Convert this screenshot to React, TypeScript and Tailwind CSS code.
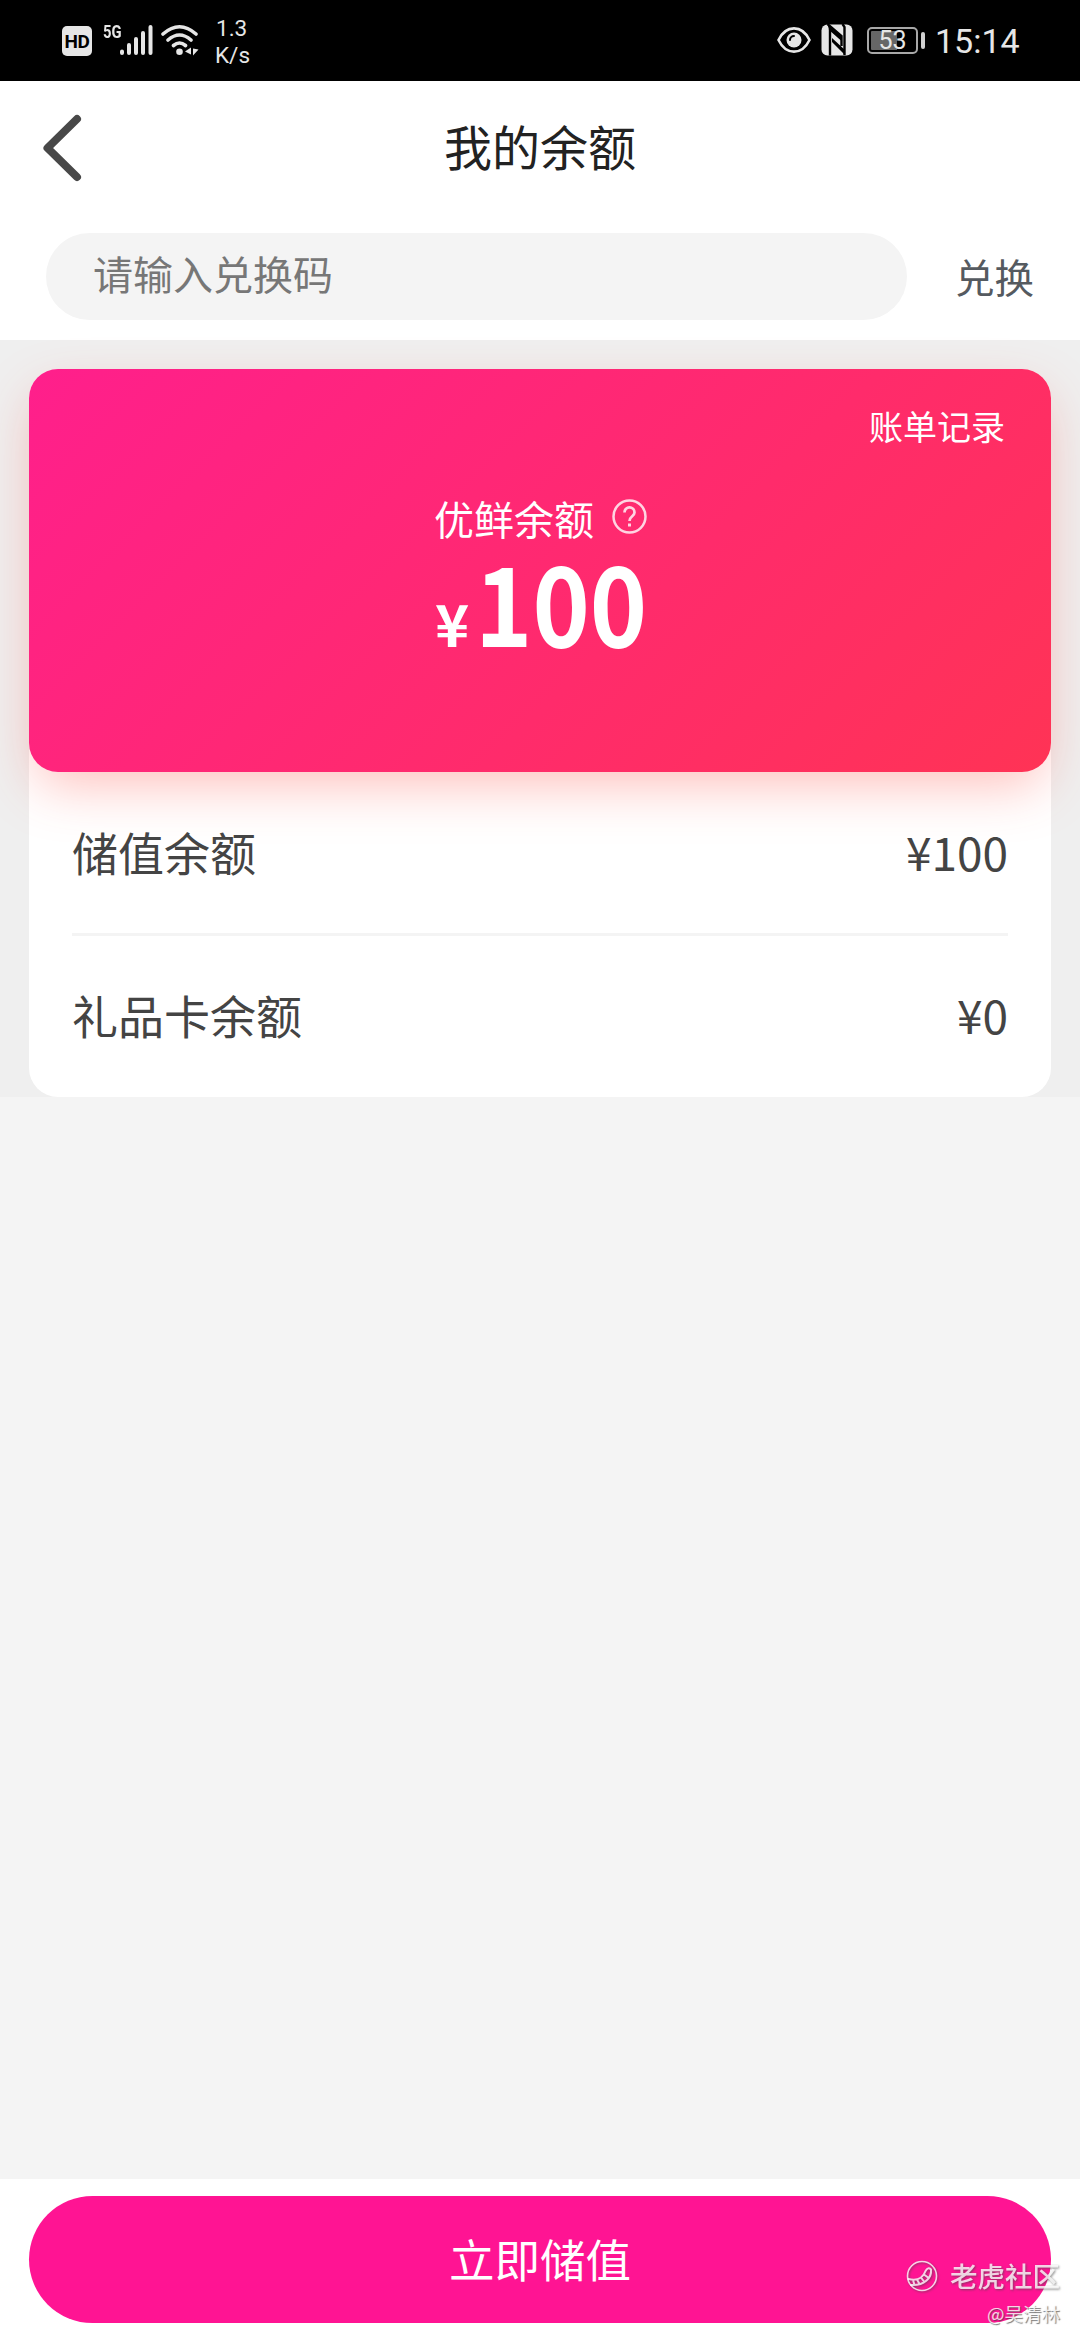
import React from "react";

function StatusBar() {
  return (
    <header className="flex h-[81px] items-start bg-black font-['Roboto',sans-serif] text-[#e6e6e6]">
      <div className="ml-[62px] mt-[26px] flex h-[30px] w-[30px] items-center justify-center rounded-[5px] bg-[#e6e6e6] text-[19px] font-bold leading-none tracking-[-0.500px] text-black">
        HD
      </div>
      <div className="ml-[11px] mt-[24px] w-[17px] origin-left scale-x-[0.82] text-[18px] font-bold leading-[16px]">5G</div>
      <svg className="mt-[24px] h-[32px] w-[34px]" viewBox="0 0 34 32" stroke="#e6e6e6" strokeWidth="4" strokeLinecap="round">
        <path d="M2 27.5v1.5M9 21v8M16 15v14M23 9v20M30.500 3v26" />
      </svg>
      <svg className="ml-[7px] mt-[24px] h-[32px] w-[38px]" viewBox="0 0 38 32" fill="none" stroke="#e6e6e6" strokeWidth="3.600" strokeLinecap="round">
        <path d="M2 10Q18.500-4.500 35 10M7 16Q18.500 6 30 16M12.500 21.500Q18.500 16.500 24.500 21.500" />
        <circle cx="18.500" cy="27.800" r="3.300" fill="#e6e6e6" stroke="none" />
        <path d="M30 23.500v7L24 27.500zM32 24.500v7l5.500-6z" fill="#e6e6e6" stroke="none" />
      </svg>
      <div className="ml-[16px] mt-[15px] text-[22.500px] leading-[27px]">
        <div className="pl-[1px]">1.3</div>
        <div>K/s</div>
      </div>
      <div className="flex-1" />
      <svg className="mt-[26px] h-[28px] w-[34px]" viewBox="0 0 34 28" fill="none" stroke="#e6e6e6">
        <path d="M1.500 14C9-1.500 25-1.500 32.500 14C25 29.500 9 29.500 1.500 14z" strokeWidth="2.600" />
        <circle cx="17" cy="14" r="7.500" fill="#e6e6e6" stroke="none" />
        <path d="M13 14a4 4 0 0 1 4-4" stroke="#000" strokeWidth="2" strokeLinecap="round" />
      </svg>
      <svg className="ml-[10px] mt-[24px] h-[32px] w-[32px]" viewBox="0 0 32 32">
        <rect x="0.500" y="0.500" width="31" height="31" rx="6" fill="#e6e6e6" />
        <path d="M6.500 0L20.500 12V22M9 5V31.500M21.500 0L23.500 3V31" fill="none" stroke="#000" strokeWidth="2.400" />
        <path d="M6.500 0L20.500 12V17L8 6zM11 14L24 26V31L11 18z" fill="#000" />
      </svg>
      <div className="ml-[14px] mt-[27px] flex h-[27px] w-[51px] items-center justify-center rounded-[5px] border-2 border-[#a8a8a8] bg-[linear-gradient(90deg,#666_26px,transparent_26px)] bg-origin-content p-[2px] text-[25px] leading-none [background-clip:content-box]">
        53
      </div>
      <div className="ml-[3px] mt-[32px] h-[17px] w-[4px] rounded-[2px] bg-[#d0d0d0]" />
      <div className="ml-[10px] mr-[60px] mt-[21px] w-[85px] whitespace-nowrap text-[34px] leading-[40px]">15:14</div>
    </header>
  );
}

function Row({ label, value }: { label: string; value: string }) {
  return (
    <div className="flex items-center justify-between text-[46px] leading-[60px] text-[#444]">
      <span>{label}</span>
      <span>{value}</span>
    </div>
  );
}

function Watermark() {
  return (
    <div className="pointer-events-none absolute bottom-[15px] right-[20px] flex flex-col items-end text-white/80">
      <div className="flex items-center [filter:drop-shadow(1px_1px_1px_rgba(70,70,70,0.75))]">
        <svg className="mr-[12px] h-[32px] w-[32px]" viewBox="0 0 32 32" fill="none" stroke="currentColor" strokeWidth="1.600">
          <circle cx="16" cy="16" r="14.500" />
          <path d="M2.500 19C11 21 17 18 19.500 11Q22 6.500 25 9.500C26 18 18 26 5 25M7 20l1.500 5M11 19.500l2.500 4.500M15 17.500l3 4M18 14.500l4 3" strokeWidth="2" strokeLinecap="round" />
        </svg>
        <span className="relative top-[-1px] text-[27.500px] font-medium leading-[32px]">老虎社区</span>
      </div>
      <span className="mt-[9px] text-[18.500px] leading-[24px] [text-shadow:1px_1px_1px_rgba(70,70,70,0.75)]">@吴清林</span>
    </div>
  );
}

export default function App() {
  return (
    <div className="flex h-[2340px] w-[1080px] flex-col overflow-hidden bg-[#f4f4f4] font-['Noto_Sans_CJK_SC',sans-serif]">
      <StatusBar />
      <div className="h-[259px] bg-white">
        <div className="relative flex h-[134px] items-center justify-center pb-[7px]">
          <button className="absolute left-[40px] top-[30px]" aria-label="返回">
            <svg className="h-[74px] w-[46px]" viewBox="0 0 46 74" fill="none" stroke="#484848" strokeWidth="8" strokeLinecap="round" strokeLinejoin="round">
              <path d="M37 8L7.500 37L37 66" />
            </svg>
          </button>
          <h1 className="text-[48px] leading-[60px] text-[#222]">我的余额</h1>
        </div>
        <div className="mt-[18px] flex items-center pl-[46px] pr-[46px]">
          <input
            className="h-[87px] w-[861px] rounded-full bg-[#f4f4f4] pb-[8px] pl-[47px] text-[40px] outline-none placeholder:text-[#777] placeholder:opacity-100"
            placeholder="请输入兑换码"
          />
          <button className="mb-[2px] ml-[48px] whitespace-nowrap text-[39.500px] leading-[60px] text-[#555a60]">兑换</button>
        </div>
      </div>

      <main className="h-[757px] bg-[#efefef] px-[29px] pt-[29px]">
        <div className="h-[728px] rounded-[29px] bg-white">
          <section className="flex h-[403px] flex-col items-center rounded-[29px] bg-[linear-gradient(135deg,#ff1f8c_0%,#ff3355_100%)] text-white shadow-[0_20px_54px_-8px_rgba(255,75,65,0.36)]">
            <button className="mr-[46px] mt-[32px] self-end text-[34px] leading-[50px]">账单记录</button>
            <div className="mt-[37px] flex items-center pl-[1px] text-[40px] leading-[60px]">
              优鲜余额
              <svg className="mb-[4px] ml-[18px] h-[35px] w-[35px] opacity-80" viewBox="0 0 35 35" fill="none" stroke="white" strokeWidth="2.500">
                <circle cx="17.500" cy="17.500" r="16" />
                <path d="M12.500 13.500C12.500 6.500 22.500 7 22.500 13.500C22.500 17.500 17.500 17 17.500 22" strokeWidth="2.700" />
                <path d="M17.500 24.500v3" strokeWidth="3" />
              </svg>
            </div>
            <div className="mt-[9px] flex w-[210px] items-baseline font-bold leading-[84px]">
              <span className="text-[58px]">¥</span>
              <span className="ml-[6px] w-[172px] origin-left scale-x-[0.885] text-[110px]">100</span>
            </div>
          </section>
          <div className="px-[43px] pt-[49px]">
            <Row label="储值余额" value="¥100" />
            <div className="mb-[48px] mt-[52px] h-[3px] bg-[#f4f4f4]" />
            <Row label="礼品卡余额" value="¥0" />
          </div>
        </div>
      </main>

      <div className="flex-1" />
      <footer className="relative h-[161px] bg-white px-[29px] pt-[17px]">
        <button className="block h-[127px] w-full rounded-full bg-[#ff1493] pb-[2px] text-[45.500px] text-white">立即储值</button>
        <Watermark />
      </footer>
    </div>
  );
}
